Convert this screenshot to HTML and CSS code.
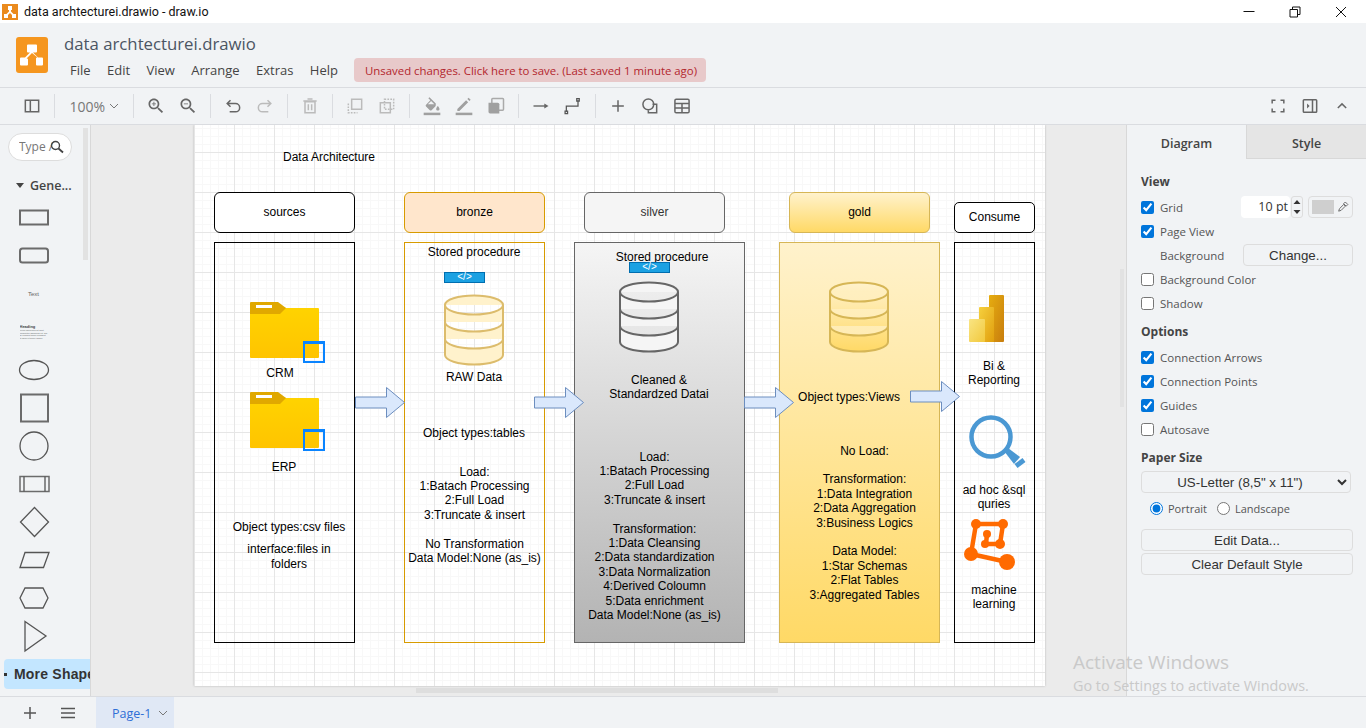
FILE: index.html
```html
<!DOCTYPE html>
<html lang="en">
<head>
<meta charset="utf-8">
<title>data archtecturei.drawio - draw.io</title>
<link rel="stylesheet" href="styles.css">
</head>
<body>
<svg class="defs" width="0" height="0" aria-hidden="true">
  <defs>
    <linearGradient id="goldGrad" x1="0" y1="0" x2="0" y2="1"><stop offset="0" stop-color="#fff2cc"/><stop offset="1" stop-color="#ffd966"/></linearGradient>
    <linearGradient id="folderGrad" x1="0" y1="0" x2="0" y2="1"><stop offset="0" stop-color="#ffd400"/><stop offset="1" stop-color="#ffc400"/></linearGradient>
    <linearGradient id="pbA" x1="0" y1="0" x2="1" y2="1"><stop offset="0" stop-color="#e6ad10"/><stop offset="1" stop-color="#c87d0e"/></linearGradient>
    <linearGradient id="pbB" x1="0" y1="0" x2="1" y2="1"><stop offset="0" stop-color="#f6d03e"/><stop offset="1" stop-color="#e09e0d"/></linearGradient>
    <linearGradient id="pbC" x1="0" y1="0" x2="1" y2="1"><stop offset="0" stop-color="#f9e583"/><stop offset="1" stop-color="#f2c83c"/></linearGradient>
    <symbol id="arrow" viewBox="0 0 50 32"><path d="M.5 10H31.500V.5L49.500 15.500 31.500 30.500V21H.5Z" fill="#dae8fc" stroke="#6c8ebf"/></symbol>
    <symbol id="folder" viewBox="0 0 69 56">
      <path d="M0 3a1 1 0 0 1 1-1h24l11 4h32a1 1 0 0 1 1 1V55a1 1 0 0 1-1 1H1a1 1 0 0 1-1-1Z" fill="url(#folderGrad)"/>
      <path d="M0 1a1 1 0 0 1 1-1h27l8 6-6 6H0Z" fill="#e0a800"/>
      <path d="M6 3h16v3H6Z" fill="#fff"/>
    </symbol>
    <symbol id="cyl" viewBox="0 0 62 72">
      <path d="M2 11a29 9.500 0 0 1 58 0V61a29 9.500 0 0 1-58 0Z M2 11a29 9.500 0 0 0 58 0M2 28a29 9.500 0 0 0 58 0M2 45a29 9.500 0 0 0 58 0"/>
    </symbol>
  </defs>
</svg>

<div class="titlebar">
  <svg class="tb-logo" viewBox="0 0 16 16"><rect width="16" height="16" fill="#ea8a1d"/><path d="M6 2h4v4H9v1.500L11.500 10H14v4h-4v-3L8 9l-2 2v3H2v-4h2.500L7 7.500V6H6Z" fill="#fff"/></svg>
  <span class="tb-text">data archtecturei.drawio - draw.io</span>
  <div class="win-btns">
    <svg class="win" viewBox="0 0 12 12"><path d="M.5 5.500h11" stroke="#111" fill="none"/></svg>
    <svg class="win" viewBox="0 0 12 12"><path d="M1 3.500h7.500v7.500H1ZM3.500 3.500V1H11v7.500H8.500" stroke="#111" fill="none"/></svg>
    <svg class="win" viewBox="0 0 12 12"><path d="M1 1l10 10M11 1 1 11" stroke="#111" fill="none"/></svg>
  </div>
</div>

<header class="header">
  <svg class="logo" viewBox="0 0 32 36"><rect width="32" height="36" rx="3" fill="#f5961f"/><path d="M12 7.500h8a1 1 0 0 1 1 1v6a1 1 0 0 1-1 1h-3l5 5h4a1 1 0 0 1 1 1v6a1 1 0 0 1-1 1H21a1 1 0 0 1-1-1v-6a1 1 0 0 1 1-1h.5L16 16l-5.500 5.500H11a1 1 0 0 1 1 1v5a1 1 0 0 1-1 1H5a1 1 0 0 1-1-1v-6a1 1 0 0 1 1-1h4l5-5h-2a1 1 0 0 1-1-1v-6a1 1 0 0 1 1-1Z" fill="#fff"/></svg>
  <div class="head-col">
    <div class="doc-title">data archtecturei.drawio</div>
    <div class="menu-row">
      <nav class="menu"><span>File</span><span>Edit</span><span>View</span><span>Arrange</span><span>Extras</span><span>Help</span></nav>
      <div class="unsaved">Unsaved changes. Click here to save. (Last saved 1 minute ago)</div>
    </div>
  </div>
</header>

<div class="toolbar">
  <div class="tbtn"><svg viewBox="0 0 24 24" class="ic"><path d="M4 5h16v14H4ZM10 5v14" class="st"/></svg></div>
  <i class="sep"></i>
  <div class="zoomsel">100%<svg viewBox="0 0 10 6" class="chev"><path d="M1 1l4 4 4-4" fill="none" stroke="#777"/></svg></div>
  <i class="sep"></i>
  <div class="tbtn"><svg viewBox="0 0 24 24" class="ic"><path d="M15.500 14h-.79l-.28-.27C15.410 12.590 16 11.110 16 9.500 16 5.910 13.090 3 9.500 3S3 5.910 3 9.500 5.910 16 9.500 16c1.610 0 3.090-.59 4.230-1.570l.27.28v.79l5 4.990L20.490 19l-4.990-5zm-6 0C7.010 14 5 11.990 5 9.500S7.010 5 9.500 5 14 7.010 14 9.500 11.990 14 9.500 14zM12 10h-2v2H9v-2H7V9h2V7h1v2h2z" class="fl"/></svg></div>
  <div class="tbtn"><svg viewBox="0 0 24 24" class="ic"><path d="M15.500 14h-.79l-.28-.27C15.410 12.590 16 11.110 16 9.500 16 5.910 13.090 3 9.500 3S3 5.910 3 9.500 5.910 16 9.500 16c1.610 0 3.090-.59 4.230-1.570l.27.28v.79l5 4.990L20.490 19l-4.990-5zm-6 0C7.010 14 5 11.990 5 9.500S7.010 5 9.500 5 14 7.010 14 9.500 11.990 14 9.500 14zM7 9h5v1H7z" class="fl"/></svg></div>
  <i class="sep"></i>
  <div class="tbtn"><svg viewBox="0 0 24 24" class="ic"><path d="M9 5 5 9l4 4M5 9h10a5 5 0 0 1 0 10H8" class="st"/></svg></div>
  <div class="tbtn"><svg viewBox="0 0 24 24" class="ic"><path d="M15 5l4 4-4 4M19 9H9a5 5 0 0 0 0 10h7" class="st off"/></svg></div>
  <i class="sep"></i>
  <div class="tbtn"><svg viewBox="0 0 24 24" class="ic"><path d="M6 7h12v13H6ZM4 6h16M9 3.500h6M10 10v7M14 10v7" class="st off"/></svg></div>
  <i class="sep"></i>
  <div class="tbtn"><svg viewBox="0 0 24 24" class="ic"><path d="M8 4h12v12H8Z" class="st off"/><path d="M4 9v11h11" class="st off dash"/></svg></div>
  <div class="tbtn"><svg viewBox="0 0 24 24" class="ic"><path d="M9 4h11v12H9Z" class="st off dash"/><path d="M4 8h12v12H4Z" class="st off"/></svg></div>
  <i class="sep"></i>
  <div class="tbtn"><svg viewBox="0 0 24 24" class="ic"><path d="M16.560 8.940 9 1.400 7.600 2.800l2.400 2.400-5.150 5.150c-.59.590-.59 1.540 0 2.120l4.500 4.500c.29.290.68.440 1.060.440s.770-.15 1.060-.44l4.500-4.500c.590-.58.590-1.530.59-3.530zM7 10l3.900-3.900L14.800 10zM19 12s-2 2.170-2 3.500c0 1.100.9 2 2 2s2-.9 2-2c0-1.330-2-3.500-2-3.500z" class="fl gray"/><path d="M2 20h20v3H2z" class="fl gray"/></svg></div>
  <div class="tbtn"><svg viewBox="0 0 24 24" class="ic"><path d="M4 15.500V18h2.500L17 7.500 14.500 5ZM16 3.500 18.500 6l1.500-1.500L17.500 2Z" class="fl gray"/><path d="M2 20h20v3H2z" class="fl gray"/></svg></div>
  <div class="tbtn"><svg viewBox="0 0 24 24" class="ic"><path d="M8 3h12a1 1 0 0 1 1 1v12a1 1 0 0 1-1 1H8a1 1 0 0 1-1-1V4a1 1 0 0 1 1-1Z" class="st gray"/><path d="M3 8h11a2 2 0 0 1 2 2v11H5a2 2 0 0 1-2-2Z" class="fl gray"/></svg></div>
  <i class="sep"></i>
  <div class="tbtn"><svg viewBox="0 0 24 24" class="ic"><path d="M3 12h16" class="st thin"/><path d="M16 9l5 3-5 3Z" class="fl"/></svg></div>
  <div class="tbtn"><svg viewBox="0 0 24 24" class="ic"><path d="M4 19v-7h14V5" class="st thin"/><path d="M2.500 18h3v3h-3ZM16.500 3h3v3h-3Z" class="st thin"/></svg></div>
  <i class="sep"></i>
  <div class="tbtn"><svg viewBox="0 0 24 24" class="ic"><path d="M12 5v14M5 12h14" class="st"/></svg></div>
  <div class="tbtn"><svg viewBox="0 0 24 24" class="ic"><circle cx="10" cy="10" r="6.500" class="st"/><path d="M15 10h5v10H10v-3" class="st"/></svg></div>
  <div class="tbtn"><svg viewBox="0 0 24 24" class="ic"><path d="M5 4h14a1.500 1.500 0 0 1 1.500 1.500v13A1.500 1.500 0 0 1 19 20H5a1.500 1.500 0 0 1-1.500-1.500v-13A1.500 1.500 0 0 1 5 4ZM3.500 9h17M3.500 14.500h17M12 9v11" class="st"/></svg></div>
  <div class="tb-right">
    <div class="tbtn"><svg viewBox="0 0 24 24" class="ic"><path d="M5 9V5h4M15 5h4v4M19 15v4h-4M9 19H5v-4" class="st"/></svg></div>
    <div class="tbtn"><svg viewBox="0 0 24 24" class="ic"><path d="M5 4.500h14a1 1 0 0 1 1 1v13a1 1 0 0 1-1 1H5a1 1 0 0 1-1-1v-13a1 1 0 0 1 1-1ZM15 4.500v15" class="st"/><path d="M8.500 9l3 3-3 3Z" class="fl"/></svg></div>
    <div class="tbtn"><svg viewBox="0 0 24 24" class="ic"><path d="M7 14.500l5-5 5 5" class="st"/></svg></div>
  </div>
</div>

<main class="main">
  <aside class="sidebar">
    <div class="search"><span class="search-t">Type /</span><svg class="search-i" viewBox="0 0 14 14"><circle cx="5.500" cy="5.500" r="4" fill="none" stroke="#444" stroke-width="1.400"/><path d="M8.500 8.500l4.500 4" stroke="#444" stroke-width="1.800"/></svg></div>
    <div class="gene"><svg viewBox="0 0 8 5" class="gene-i"><path d="M0 0h8L4 5Z" fill="#444"/></svg>Gene...</div>
    <div class="shapes">
      <div class="shape"><svg viewBox="0 0 32 20" class="sh"><rect x="2" y="2.500" width="28" height="14" class="s2"/></svg></div>
      <div class="shape"><svg viewBox="0 0 32 20" class="sh"><rect x="2" y="2.500" width="28" height="14" rx="2.500" class="s2"/></svg></div>
      <div class="shape"><span class="mini-text">Text</span></div>
      <div class="shape"><div class="mini-head"><b>Heading</b><span>Lorem ipsum dolor sit amet, consectetur adipisicing elit, sed do eiusmod tempor incididunt ut labore et dolore magna aliqua.</span></div></div>
      <div class="shape"><svg viewBox="0 0 32 24" class="sh"><ellipse cx="16" cy="12" rx="14.500" ry="9.500" class="s1"/></svg></div>
      <div class="shape"><svg viewBox="0 0 32 32" class="sh"><rect x="3" y="2.500" width="27" height="27" class="s2"/></svg></div>
      <div class="shape"><svg viewBox="0 0 32 32" class="sh"><circle cx="16" cy="16" r="14" class="s1"/></svg></div>
      <div class="shape"><svg viewBox="0 0 32 20" class="sh"><rect x="2" y="2.500" width="29" height="15" class="s2 lt"/><path d="M6 2.500v15M27 2.500v15" class="s1"/></svg></div>
      <div class="shape"><svg viewBox="0 0 32 32" class="sh"><path d="M16.500 1.500l14 14.500-14 14.500L2.500 16Z" class="s1"/></svg></div>
      <div class="shape"><svg viewBox="0 0 32 20" class="sh"><path d="M7 2.500h24l-5.500 15H2Z" class="s1"/></svg></div>
      <div class="shape"><svg viewBox="0 0 32 24" class="sh"><path d="M7 2h18l5 10-5 10H7L2 12Z" class="s1"/></svg></div>
      <div class="shape"><svg viewBox="0 0 32 32" class="sh"><path d="M7 1.500 28 16 7 31Z" class="s1"/></svg></div>
    </div>
    <div class="more"><i class="more-dot"></i>More Shapes</div>
    <div class="side-scroll"></div>
  </aside>

  <section class="canvas">
    <div class="page">
      <div class="lbl l-title">Data Architecture</div>

      <div class="box h-sources">sources</div>
      <div class="box b-sources"></div>
      <div class="box h-bronze">bronze</div>
      <div class="box b-bronze"></div>
      <div class="box h-silver">silver</div>
      <div class="box b-silver"></div>
      <div class="box h-gold">gold</div>
      <div class="box b-gold"></div>
      <div class="box h-consume">Consume</div>
      <div class="box b-consume"></div>

      <svg class="node folder f1"><use href="#folder"/></svg>
      <div class="bluebox bb1"></div>
      <svg class="node folder f2"><use href="#folder"/></svg>
      <div class="bluebox bb2"></div>
      <div class="lbl l-crm">CRM</div>
      <div class="lbl l-erp">ERP</div>
      <div class="lbl l-obj1">Object types:csv files</div>
      <div class="lbl l-intf">interface:files in<br>folders</div>

      <div class="lbl l-sp1">Stored procedure</div>
      <div class="chip c1">&lt;/&gt;</div>
      <svg class="node cyl cy-bronze"><use href="#cyl"/></svg>
      <div class="lbl l-raw">RAW Data</div>
      <div class="lbl l-obj2">Object types:tables</div>
      <div class="lbl l-bronze">Load:<br>1:Batach Processing<br>2:Full Load<br>3:Truncate &amp; insert<br><br>No Transformation<br>Data Model:None (as_is)</div>

      <div class="lbl l-sp2">Stored procedure</div>
      <div class="chip c2">&lt;/&gt;</div>
      <svg class="node cyl cy-silver"><use href="#cyl"/></svg>
      <div class="lbl l-clean">Cleaned &amp;<br>Standardzed Datai</div>
      <div class="lbl l-silver">Load:<br>1:Batach Processing<br>2:Full Load<br>3:Truncate &amp; insert<br><br>Transformation:<br>1:Data Cleansing<br>2:Data standardization<br>3:Data Normalization<br>4:Derived Coloumn<br>5:Data enrichment<br>Data Model:None (as_is)</div>

      <svg class="node cyl cy-gold"><use href="#cyl"/></svg>
      <div class="lbl l-obj3">Object types:Views</div>
      <div class="lbl l-gold">No Load:<br><br>Transformation:<br>1:Data Integration<br>2:Data Aggregation<br>3:Business Logics<br><br>Data Model:<br>1:Star Schemas<br>2:Flat Tables<br>3:Aggregated Tables</div>

      <svg class="node pbi" viewBox="0 0 35 47"><rect x="20" width="15" height="47" rx="1" fill="url(#pbA)"/><rect x="10" y="12" width="15" height="35" rx="1" fill="url(#pbB)"/><rect y="24" width="16" height="23" rx="1" fill="url(#pbC)"/></svg>
      <div class="lbl l-bi">Bi &amp;<br>Reporting</div>
      <svg class="node mag" viewBox="0 0 58 56"><circle cx="22" cy="22" r="19.500" fill="none" stroke="#4a98d3" stroke-width="4.500"/><path d="M35 36l4-3 12 9-6 7Z" fill="#4a98d3"/><path d="M47 51l8-6" stroke="#4a98d3" stroke-width="5" fill="none"/></svg>
      <div class="lbl l-adhoc">ad hoc &amp;sql<br>quries</div>
      <svg class="node ml" viewBox="0 0 52 52"><path d="M12 6H39L36 26H22L23 16M12 6 7 36 43 44" fill="none" stroke="#ff6a00" stroke-width="4.500"/><g fill="#ff6a00"><circle cx="12" cy="6" r="5"/><circle cx="39" cy="6" r="5"/><circle cx="7" cy="36" r="7"/><circle cx="43" cy="44" r="8"/><circle cx="36" cy="26" r="5"/><circle cx="23" cy="16" r="4"/><circle cx="21" cy="26" r="4"/></g></svg>
      <div class="lbl l-ml">machine<br>learning</div>

      <svg class="node arr a1"><use href="#arrow"/></svg>
      <svg class="node arr a2"><use href="#arrow"/></svg>
      <svg class="node arr a3"><use href="#arrow"/></svg>
      <svg class="node arr a4"><use href="#arrow"/></svg>
    </div>
    <div class="hscroll"></div>
    <div class="vscroll"></div>
  </section>

  <aside class="panel">
    <div class="tabs"><div class="tab on">Diagram</div><div class="tab">Style</div></div>
    <div class="pbody">
      <h4 class="ph ph-first">View</h4>
      <div class="row"><label class="chk"><input type="checkbox" checked>Grid</label>
        <div class="grid-ctl">
          <div class="pt">10 pt</div>
          <div class="spin"><svg viewBox="0 0 10 20"><path d="M5 3l3.500 4h-7ZM5 17l3.500-4h-7Z" fill="#333"/></svg></div>
          <div class="swatch"><i></i><svg viewBox="0 0 14 14"><path d="M2 12l1-3 5-5 2 2-5 5ZM8 3l2-2 3 3-2 2Z" fill="none" stroke="#555"/></svg></div>
        </div>
      </div>
      <div class="row"><label class="chk"><input type="checkbox" checked>Page View</label></div>
      <div class="row indent"><span>Background</span><button class="btn btn-change">Change...</button></div>
      <div class="row"><label class="chk"><input type="checkbox">Background Color</label></div>
      <div class="row"><label class="chk"><input type="checkbox">Shadow</label></div>
      <h4 class="ph">Options</h4>
      <div class="row"><label class="chk"><input type="checkbox" checked>Connection Arrows</label></div>
      <div class="row"><label class="chk"><input type="checkbox" checked>Connection Points</label></div>
      <div class="row"><label class="chk"><input type="checkbox" checked>Guides</label></div>
      <div class="row"><label class="chk"><input type="checkbox">Autosave</label></div>
      <h4 class="ph">Paper Size</h4>
      <select class="paper"><option>US-Letter (8,5" x 11")</option></select>
      <div class="radios">
        <label class="rad"><input type="radio" name="o" checked>Portrait</label>
        <label class="rad"><input type="radio" name="o">Landscape</label>
      </div>
      <button class="btn btn-wide btn-edit">Edit Data...</button>
      <button class="btn btn-wide">Clear Default Style</button>
    </div>
  </aside>
</main>

<footer class="footer">
  <svg class="f-ic fi1" viewBox="0 0 14 14"><path d="M7 1v12M1 7h12" stroke="#555" stroke-width="1.500"/></svg>
  <svg class="f-ic fi2" viewBox="0 0 14 14"><path d="M0 2.500h14M0 7h14M0 11.500h14" stroke="#555" stroke-width="1.500"/></svg>
  <div class="pagetab">Page-1<svg viewBox="0 0 10 6" class="chev"><path d="M1 1l4 4 4-4" fill="none" stroke="#777"/></svg></div>
</footer>

<div class="activate"><div class="a1t">Activate Windows</div><div class="a2t">Go to Settings to activate Windows.</div></div>
</body>
</html>
```
FILE: styles.css
```css
*{box-sizing:border-box}
html,body{margin:0;padding:0;height:100%;overflow:hidden}
body{width:1366px;height:728px;display:flex;flex-direction:column;font-family:"Open Sans","Noto Sans",sans-serif;color:#333;background:#f1f3f5;position:relative}
.defs{position:absolute}

.titlebar{height:23px;background:#fff;display:flex;align-items:center;flex:none}
.tb-logo{width:16px;height:16px;margin:0 6px 0 2px}
.tb-text{font:12.500px Roboto,sans-serif;color:#111}
.win-btns{margin-left:auto;display:flex;gap:34px;padding-right:19px}
.win{width:12px;height:12px}

.header{height:65px;flex:none;background:#f1f3f5;border-bottom:1px solid #dadce0;display:flex;padding:14px 0 0 16px}
.logo{width:32px;height:36px}
.head-col{margin-left:16px;display:flex;flex-direction:column}
.doc-title{font-size:16.750px;line-height:14px;color:#4b5563;height:21px}
.menu-row{display:flex;align-items:center}
.menu{display:flex;margin-left:6px;font-size:13px;color:#444;gap:16.400px;width:284px}
.unsaved{height:24px;width:352px;background:#e8c9ca;border-radius:4px;color:#b3262d;font-size:11.400px;line-height:25px;padding-left:11px;white-space:nowrap}

.toolbar{height:37px;flex:none;background:#f1f3f5;border-bottom:1px solid #dadce0;display:flex;align-items:center;padding:0 8px 0 16px}
.tbtn{width:32px;height:28px;display:flex;align-items:center;justify-content:center;flex:none}
.ic{width:20px;height:20px}
.st{fill:none;stroke:#666;stroke-width:1.800}
.st.off{stroke:#bbb}
.st.gray{stroke:#aaa}
.st.thin{stroke-width:1.500;stroke:#555}
.st.dash{stroke-dasharray:2 1.500}
.fl{fill:#666}
.fl.gray{fill:#a0a0a0}
.sep{width:1px;height:24px;background:#dadce0;margin:0 6px;flex:none}
.zoomsel{width:66px;font-size:14px;color:#777;display:flex;align-items:center;justify-content:flex-end;padding-right:8px;gap:4px}
.chev{width:10px;height:6px}
.tb-right{margin-left:auto;display:flex}

.main{flex:1;display:flex;min-height:0}
.sidebar{width:91px;flex:none;border-right:1px solid #d8d8d8;background:#f1f3f5;position:relative;padding-top:8px;overflow:hidden}
.search{width:64px;height:28px;margin-left:8px;background:#fff;border:1px solid #ddd;border-radius:14px;position:relative;overflow:hidden;font-size:12px;line-height:26px;color:#777;padding-left:10px;white-space:nowrap}
.search-i{position:absolute;left:41px;top:6px;width:14px;height:14px}
.search-t{display:block;width:40px;overflow:hidden}
.gene{height:24px;margin-top:12px;display:flex;align-items:center;font-size:12.500px;color:#444;padding-left:16px;gap:6px;font-weight:600}
.gene-i{width:8px;height:5px}
.shapes{margin-top:2px}
.shape{height:38px;width:67px;display:flex;align-items:center;justify-content:center}
.sh{width:32px;overflow:visible}
.s1{fill:none;stroke:#555;stroke-width:1.300}
.s2{fill:none;stroke:#6b6b6b;stroke-width:2}
.s2.lt{stroke-width:1.500}
.mini-text{font:6px "Liberation Sans",sans-serif;color:#666}
.mini-head{width:28px;font:2px/2.500px "Liberation Sans",sans-serif;color:#666;height:16px;overflow:hidden}
.mini-head b{display:block;font-size:4px;line-height:5px;color:#444}
.more{position:relative;width:110px;height:30px;margin:4px 0 0 4px;background:#c3e6ff;border-radius:4px;font:bold 14px/30px "Liberation Sans",sans-serif;color:#333;white-space:nowrap;padding-left:10px;letter-spacing:.2px}
.more-dot{position:absolute;left:0;top:14px;width:3px;height:3px;background:#333}
.side-scroll{position:absolute;left:83px;top:3px;width:5px;height:132px;background:#e2e2e2}

.canvas{flex:1;background:#ebebeb;position:relative;overflow:hidden;min-width:0}
.page{position:absolute;left:103px;top:0;width:851px;height:561px;background-color:#fff;
  background-image:linear-gradient(#e6e6e6 1px,transparent 1px),linear-gradient(90deg,#e6e6e6 1px,transparent 1px),linear-gradient(#f8f8f8 1px,transparent 1px),linear-gradient(90deg,#f8f8f8 1px,transparent 1px);
  background-size:40px 40px,40px 40px,8px 8px,8px 8px;
  background-position:0 27px,0 0,0 3px,0 0;
  box-shadow:0 0 2px #b5b5b5;
  font:12px/14.400px "Liberation Sans",sans-serif;color:#000}
.hscroll{position:absolute;left:325px;top:563px;width:362px;height:5px;background:#dedede}
.vscroll{position:absolute;left:1029px;top:144px;width:4px;height:138px;background:#e2e2e2}

.box{position:absolute;display:flex;align-items:center;justify-content:center;border:1px solid #000;text-align:center}
.h-sources{left:20px;top:67px;width:141px;height:41px;border-radius:6px;background:#fff}
.b-sources{left:20px;top:117px;width:141px;height:401px}
.h-bronze{left:210px;top:67px;width:141px;height:41px;border-radius:6px;background:#ffe6cc;border-color:#d79b00}
.b-bronze{left:210px;top:117px;width:141px;height:401px;border-color:#d79b00}
.h-silver{left:390px;top:67px;width:141px;height:41px;border-radius:6px;background:#f5f5f5;border-color:#666;color:#333}
.b-silver{left:380px;top:117px;width:171px;height:401px;border-color:#666;background:linear-gradient(#f5f5f5,#b3b3b3)}
.h-gold{left:595px;top:67px;width:141px;height:41px;border-radius:6px;background:linear-gradient(#fff2cc,#ffd966);border-color:#d6b656}
.b-gold{left:585px;top:117px;width:161px;height:401px;background:linear-gradient(#fff2cc,#ffd966);border-color:#d6b656}
.h-consume{left:760px;top:77px;width:81px;height:31px;border-radius:5px;background:#fff}
.b-consume{left:760px;top:117px;width:81px;height:401px}

.lbl{position:absolute;width:220px;margin-left:-110px;text-align:center;white-space:nowrap}
.l-title{left:135px;top:25px}
.l-crm{left:86px;top:241px}
.l-erp{left:90px;top:335px}
.l-obj1{left:95px;top:395px}
.l-intf{left:95px;top:417.400px}
.l-sp1{left:280px;top:120px}
.l-raw{left:280px;top:245px}
.l-obj2{left:280px;top:301px}
.l-bronze{left:280.500px;top:339.500px}
.l-sp2{left:468px;top:125px}
.l-clean{left:465px;top:247.600px}
.l-silver{left:460.500px;top:324.500px}
.l-obj3{left:655px;top:265px}
.l-gold{left:670.500px;top:318.500px}
.l-bi{left:800px;top:234px}
.l-adhoc{left:800px;top:358px}
.l-ml{left:800px;top:458px}

.node{position:absolute;overflow:visible}
.folder{width:69px;height:56px;left:56px}
.f1{top:177px}
.f2{top:267px}
.bluebox{position:absolute;left:109px;width:22px;height:22px;border:2px solid #0a84ff;border-top-width:3px}
.bb1{top:216px}
.bb2{top:304px}
.chip{position:absolute;width:41px;height:11px;background:#1ba1e2;border:1px solid #006eaf;color:#fff;font:10px/8px "Liberation Sans",sans-serif;text-align:center}
.c1{left:250px;top:147px}
.c2{left:435px;top:137px}
.cyl{width:62px;height:72px;stroke-width:2}
.cy-bronze{left:249px;top:169px;fill:#fff2cc;stroke:#dcbc6c}
.cy-silver{left:424px;top:156px;fill:#f5f5f5;stroke:#666}
.cy-gold{left:634px;top:156px;fill:url(#goldGrad);stroke:#d6b656}
.pbi{left:775px;top:170px;width:35px;height:47px}
.mag{left:775px;top:290px;width:58px;height:56px}
.ml{left:770px;top:393px;width:52px;height:52px}
.arr{width:50px;height:32px}
.a1{left:161px;top:262px}
.a2{left:340px;top:262px}
.a3{left:550px;top:262px}
.a4{left:716px;top:256px}

.panel{width:240px;flex:none;border-left:1px solid #d8d8d8;background:#f1f3f5;font-size:12px;color:#555}
.tabs{display:flex;height:34px}
.tab{flex:1;background:#e5e5e5;border-bottom:1px solid #d8d8d8;text-align:center;line-height:37px;font-size:12.500px;font-weight:600;color:#444}
.tab.on{background:#f1f3f5;border-bottom:0;border-right:1px solid #d8d8d8;flex:none;width:120px}
.pbody{padding:12px 13px 0 14px}
.ph{margin:6px 0 2px;font-size:12px;line-height:22px;font-weight:700;color:#444}
.ph-first{margin:0 0 2px}
.row{height:24px;display:flex;align-items:center;position:relative}
.chk{display:flex;align-items:center;gap:6px;font-size:11.500px}
.chk input{width:13px;height:13px;margin:0;accent-color:#0075db}
.indent{padding-left:19px;font-size:11.500px;justify-content:space-between}
.grid-ctl{margin-left:auto;display:flex;align-items:center;gap:1px;height:22px}
.pt{width:49px;height:22px;background:#fff;border-radius:4px;text-align:right;font:12.500px/22px "Open Sans",sans-serif;padding-right:2px;color:#333}
.spin{width:12px;height:22px;border:1px solid #ddd;border-radius:3px;margin-right:4px}
.spin svg{display:block;width:10px;height:20px}
.swatch{width:45px;height:22px;border:1px solid #ddd;border-radius:4px;display:flex;align-items:center;padding:0 3px;gap:3px}
.swatch i{width:23px;height:14px;background:#cfcfcf}
.swatch svg{width:12px;height:12px}
.btn{font:13.333px "Liberation Sans",sans-serif;color:#333;background:#f1f3f5;border:1px solid #ddd;border-radius:4px;height:22px;padding:0}
.btn-change{width:110px}
.btn-wide{display:block;width:212px;margin-bottom:2px}
.btn-edit{margin-top:10px}
.paper{display:block;width:210px;height:22px;font:13.333px "Liberation Sans",sans-serif;color:#333;background:#f1f3f5;border:1px solid #ddd;border-radius:4px;text-align:center}
.radios{display:flex;height:22px;margin-top:4px;padding-left:9px;gap:10px;align-items:center;font-size:11px}
.rad{display:flex;align-items:center;gap:5px}
.rad input{width:13px;height:13px;margin:0;accent-color:#0075db}

.footer{height:32px;flex:none;border-top:1px solid #dadce0;background:#f1f3f5;display:flex;align-items:center}
.f-ic{width:14px;height:14px}
.fi1{margin-left:23px}
.fi2{margin-left:24px}
.pagetab{margin-left:21px;width:78px;height:31px;background:#e0e8f5;color:#2f6fd6;font-size:12.500px;display:flex;align-items:center;padding:1px 0 0 16px;gap:7px}

.activate{position:absolute;left:1073px;top:650px;color:#c9c9c9;pointer-events:none;white-space:nowrap}
.a1t{font-size:19px;line-height:24px}
.a2t{font-size:14.400px;line-height:23px}
```
